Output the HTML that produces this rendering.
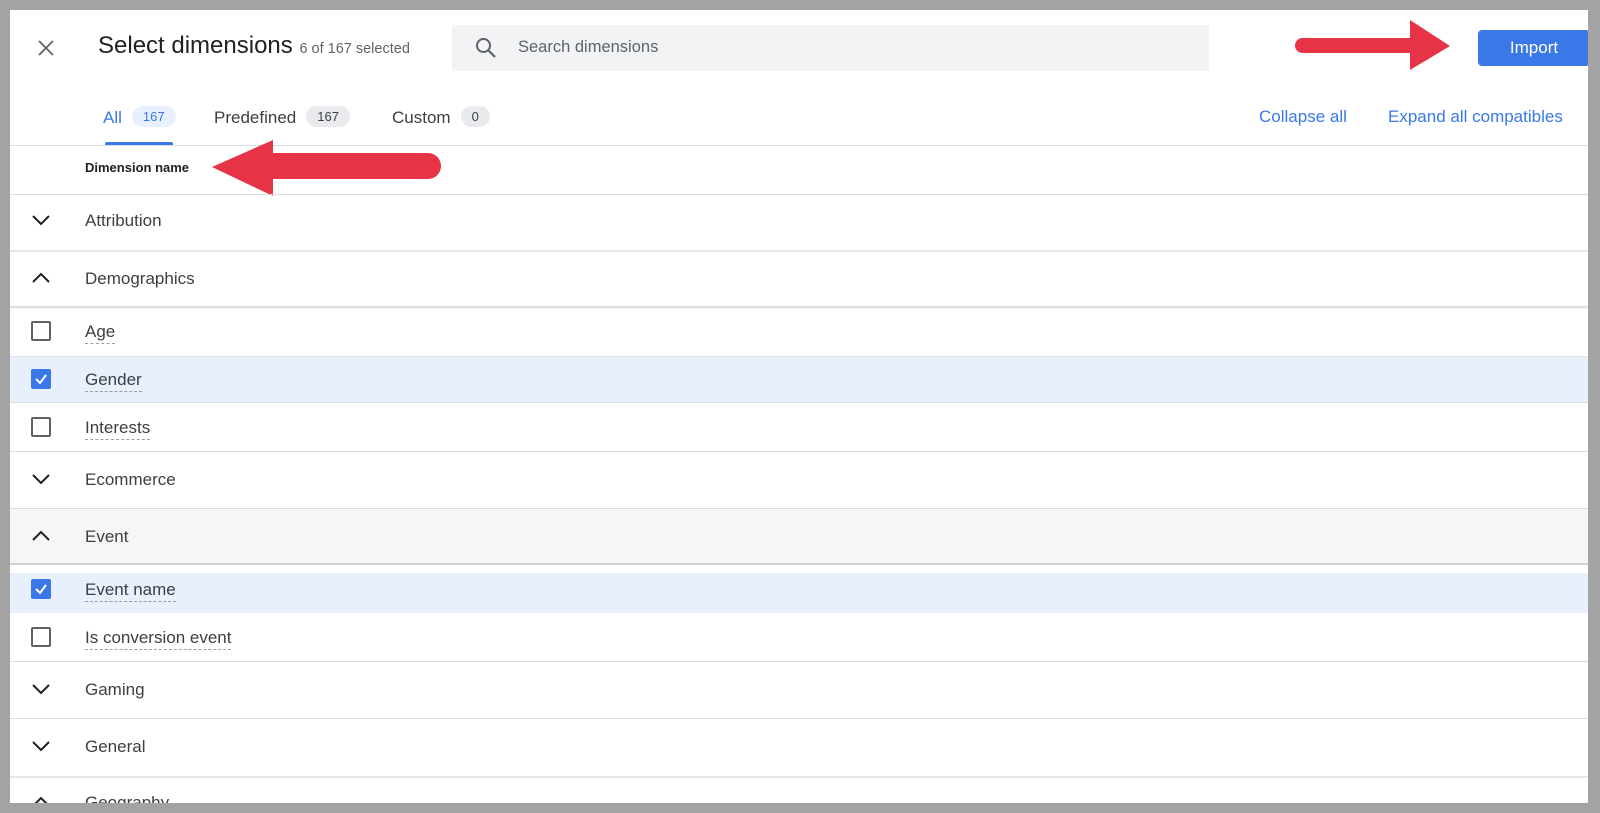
<!DOCTYPE html>
<html><head><style>
*{margin:0;padding:0;box-sizing:border-box}
body{width:1600px;height:813px;background:#a3a3a3;font-family:"Liberation Sans",sans-serif;position:relative;overflow:hidden}
#p{position:absolute;left:10px;top:10px;width:1578px;height:793px;background:#fff;overflow:hidden}
.a{position:absolute}
.t{position:absolute;left:75px;font-size:17px;color:#3c4043;transform:translateY(-50%)}
.d{border-bottom:1.5px dashed #9aa0a6;padding-bottom:2px}
.ln{position:absolute;left:0;width:1578px;height:1px;background:#dadce0}
.cb{position:absolute;left:21px;width:20px;height:20px;border:2px solid #5f6368;border-radius:2px;transform:translateY(-50%)}
.cbk{background:#3b78e7;border-color:#3b78e7}
.ch{position:absolute;left:22px;transform:translateY(-50%)}
.badge{display:inline-block;font-size:13px;border-radius:11px;padding:3px 11px;margin-left:10px;background:#e8eaed;color:#3c4043;vertical-align:2px}
</style></head><body>
<div id="p">
<svg class="a" style="left:28px;top:30px" width="16" height="16" viewBox="0 0 16 16"><path d="M1 1L15 15M15 1L1 15" stroke="#5f6368" stroke-width="1.8"/></svg>
<div class="a" style="left:88px;top:22px;font-size:24px;color:#202124">Select dimensions <span style="font-size:14.5px;color:#5f6368">6 of 167 selected</span></div>
<div class="a" style="left:442px;top:15px;width:757px;height:46px;background:#f1f3f4"></div>
<svg class="a" style="left:465px;top:27px" width="22" height="22" viewBox="0 0 22 22"><circle cx="8.5" cy="8.5" r="6.5" fill="none" stroke="#5f6368" stroke-width="2"/><path d="M13.5 13.5L20 20" stroke="#5f6368" stroke-width="2.2"/></svg>
<div class="a" style="left:508px;top:28px;font-size:16.5px;color:#5f6368">Search dimensions</div>
<svg class="a" style="left:1285px;top:8px" width="160" height="52"><rect x="0" y="20" width="125" height="15" rx="7.5" fill="#e63446"/><path d="M115 2L155 28L115 52Z" fill="#e63446"/></svg>
<div class="a" style="left:1468px;top:20px;width:112px;height:36px;background:#3b78e7;border-radius:4px;color:#fff;font-size:17px;text-align:center;line-height:36px">Import</div>
<div class="a" style="left:93px;top:96px;font-size:17px;color:#3b78e7">All<span class="badge" style="background:#e8f0fe;color:#3b78e7">167</span></div>
<div class="a" style="left:204px;top:96px;font-size:17px;color:#3c4043">Predefined<span class="badge">167</span></div>
<div class="a" style="left:382px;top:96px;font-size:17px;color:#3c4043">Custom<span class="badge">0</span></div>
<div class="a" style="left:95px;top:132px;width:68px;height:4px;background:#3b78e7;border-radius:2px 2px 0 0"></div>
<div class="a" style="left:1249px;top:97px;font-size:17px;color:#3b78e7">Collapse all</div>
<div class="a" style="left:1378px;top:97px;font-size:17px;color:#3b78e7">Expand all compatibles</div>
<div class="ln" style="top:135px"></div>
<div class="a" style="left:75px;top:150px;font-size:13px;font-weight:bold;color:#202124">Dimension name</div>
<svg class="a" style="left:200px;top:128px" width="240" height="62"><path d="M2 29L63 2V15H218A13 13 0 0 1 218 41H63V58Z" fill="#e63446"/></svg>
<div class="ln" style="top:184px"></div>

<svg class="ch" style="top:210px" width="18" height="12"><path d="M1 2L9 10L17 2" fill="none" stroke="#202124" stroke-width="2"/></svg>
<div class="t" style="top:211px">Attribution</div>
<div class="ln" style="top:240px;height:2px;background:#e4e6e8"></div>
<svg class="ch" style="top:268px" width="18" height="12"><path d="M1 10L9 2L17 10" fill="none" stroke="#202124" stroke-width="2"/></svg>
<div class="t" style="top:269px">Demographics</div>
<div class="ln" style="top:296px;height:3px;background:linear-gradient(#d4d6d8,#f4f5f6)"></div>
<div class="cb" style="top:321px"></div><div class="t" style="top:322px"><span class="d">Age</span></div>
<div class="a" style="left:0;top:346px;width:1578px;height:47px;background:#e8f0fe;border-top:1px solid #e0e4ea;border-bottom:1px solid #dadce0"></div>
<div class="cb cbk" style="top:369px"></div><svg class="a" style="left:24px;top:362px" width="14" height="14"><path d="M2 7L6 11L12 3" fill="none" stroke="#fff" stroke-width="2"/></svg>
<div class="t" style="top:370px"><span class="d">Gender</span></div>
<div class="cb" style="top:417px"></div><div class="t" style="top:418px"><span class="d">Interests</span></div>
<div class="ln" style="top:441px"></div>
<svg class="ch" style="top:469px" width="18" height="12"><path d="M1 2L9 10L17 2" fill="none" stroke="#202124" stroke-width="2"/></svg>
<div class="t" style="top:470px">Ecommerce</div>
<div class="a" style="left:0;top:498px;width:1578px;height:57px;background:#f5f6f5;border-top:1px solid #dadce0;border-bottom:2px solid #cfd2d4"></div>
<svg class="ch" style="top:526px" width="18" height="12"><path d="M1 10L9 2L17 10" fill="none" stroke="#202124" stroke-width="2"/></svg>
<div class="t" style="top:527px">Event</div>
<div class="a" style="left:0;top:563px;width:1578px;height:40px;background:#e8f0fe"></div>
<div class="cb cbk" style="top:579px"></div><svg class="a" style="left:24px;top:572px" width="14" height="14"><path d="M2 7L6 11L12 3" fill="none" stroke="#fff" stroke-width="2"/></svg>
<div class="t" style="top:580px"><span class="d">Event name</span></div>
<div class="cb" style="top:627px"></div><div class="t" style="top:628px"><span class="d">Is conversion event</span></div>
<div class="ln" style="top:651px"></div>
<svg class="ch" style="top:679px" width="18" height="12"><path d="M1 2L9 10L17 2" fill="none" stroke="#202124" stroke-width="2"/></svg>
<div class="t" style="top:680px">Gaming</div>
<div class="ln" style="top:708px"></div>
<svg class="ch" style="top:736px" width="18" height="12"><path d="M1 2L9 10L17 2" fill="none" stroke="#202124" stroke-width="2"/></svg>
<div class="t" style="top:737px">General</div>
<div class="ln" style="top:766px;height:2px;background:#e4e6e8"></div>
<svg class="ch" style="top:792px" width="18" height="12"><path d="M1 10L9 2L17 10" fill="none" stroke="#202124" stroke-width="2"/></svg>
<div class="t" style="top:793px">Geography</div>
</div>
</body></html>
